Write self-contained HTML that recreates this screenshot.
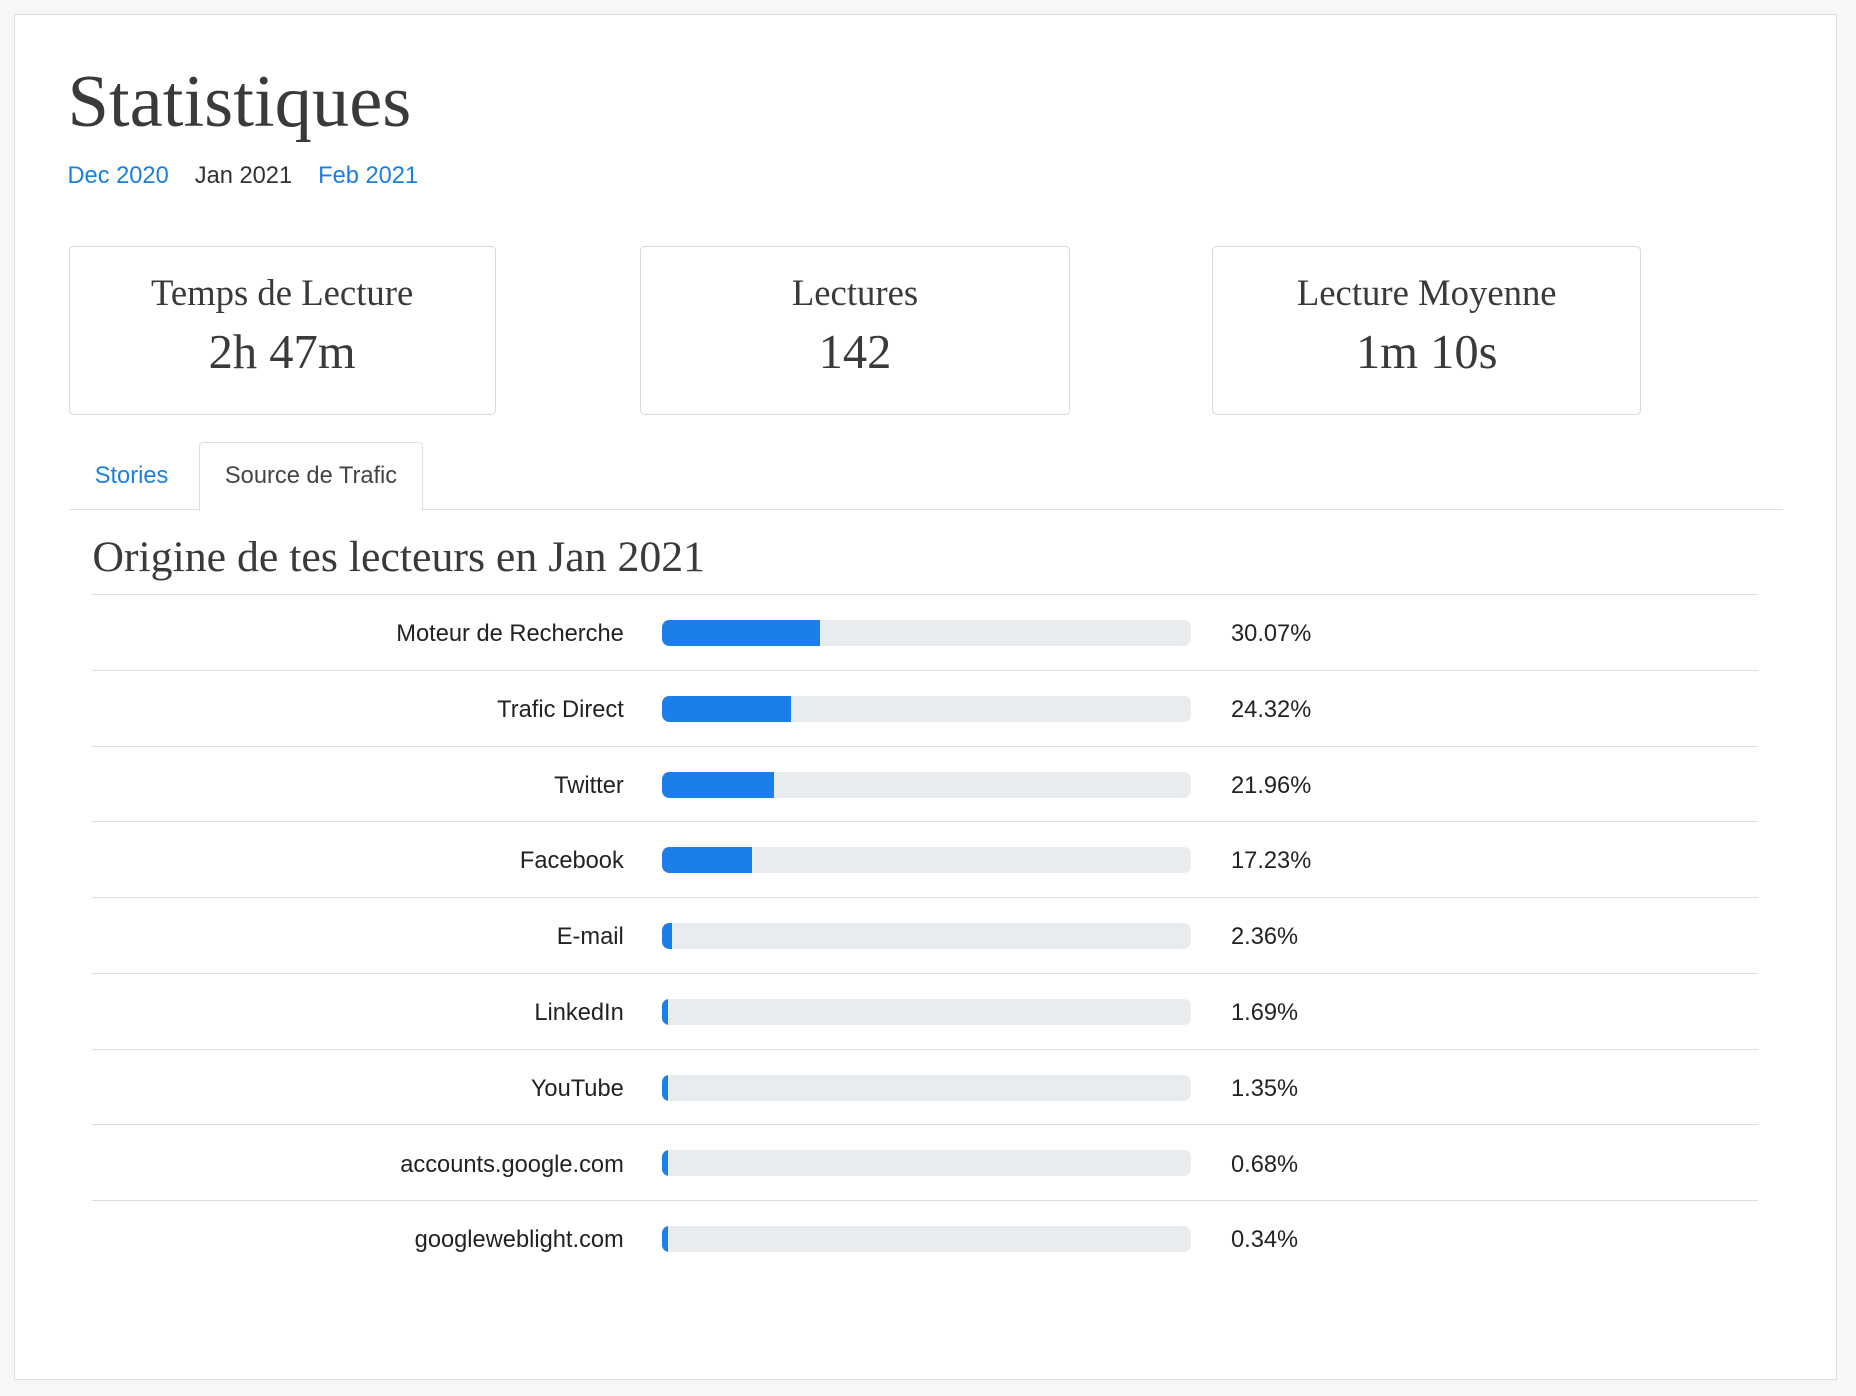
<!DOCTYPE html>
<html><head><meta charset="utf-8"><style>
html,body{margin:0;padding:0;background:#f7f7f8;}
#w{zoom:1.18367;width:1568px;height:1179px;position:relative;font-family:"Liberation Sans",sans-serif;color:#333;}
.card{position:absolute;left:12px;top:12px;width:1538px;height:1152px;background:#fff;border:1px solid #dcdde0;}
.serif{font-family:"Liberation Serif",serif;}
h1{position:absolute;left:57px;top:51px;margin:0;font-weight:normal;font-size:63px;color:#3a3a3a;}
.months{position:absolute;left:57px;top:138px;font-size:20px;}
.months span{margin-right:22px;}
.blue{color:#1a7fe0;}
.stat{position:absolute;top:208px;height:141px;border:1px solid #d8d9dc;border-radius:4px;text-align:center;color:#3a3a3a;}
.stat .l{margin-top:21px;font-size:31px;line-height:36px;}
.stat .v{margin-top:10px;font-size:41px;line-height:46px;}
.tabline{position:absolute;left:58px;top:430px;width:1448px;border-top:1px solid #dcdde0;}
.tab{position:absolute;font-size:20px;}
.acttab{position:absolute;left:168px;top:373px;width:188px;height:58px;border:1px solid #dcdde0;border-bottom:none;background:#fff;border-radius:4px 4px 0 0;}
h2{position:absolute;left:78px;top:451px;margin:0;font-weight:normal;font-size:37px;line-height:40px;color:#3a3a3a;}
.row{position:absolute;left:78px;width:1407px;height:64px;border-top:1px solid #dcdde0;}
.row .n{position:absolute;right:958px;top:22px;font-size:20px;color:#222;white-space:nowrap;}
.row .b{position:absolute;left:481px;top:21px;width:447px;height:22px;background:#e9ecef;border-radius:6px;overflow:hidden;}
.row .b i{display:block;height:100%;background:#1a7fe8;border-radius:6px 0 0 6px;}
.row .p{position:absolute;left:962px;top:22px;font-size:20px;color:#222;}
</style></head><body><div id="w">
<div class="card"></div>
<h1 class="serif">Statistiques</h1>
<div class="months"><span class="blue">Dec 2020</span><span>Jan 2021</span><span class="blue">Feb 2021</span></div>
<div class="stat serif" style="left:58px;width:359px"><div class="l">Temps de Lecture</div><div class="v">2h 47m</div></div>
<div class="stat serif" style="left:541px;width:361px"><div class="l">Lectures</div><div class="v">142</div></div>
<div class="stat serif" style="left:1024px;width:361px"><div class="l">Lecture Moyenne</div><div class="v">1m 10s</div></div>
<div class="tabline"></div>
<div class="acttab"></div>
<div class="tab blue" style="left:80px;top:391px">Stories</div>
<div class="tab" style="left:190px;top:391px;color:#444">Source de Trafic</div>
<h2 class="serif">Origine de tes lecteurs en Jan 2021</h2>
<div class="row" style="top:502px"><span class="n">Moteur de Recherche</span><div class="b"><i style="width:134px"></i></div><span class="p">30.07%</span></div>
<div class="row" style="top:566px"><span class="n">Trafic Direct</span><div class="b"><i style="width:109px"></i></div><span class="p">24.32%</span></div>
<div class="row" style="top:630px"><span class="n">Twitter</span><div class="b"><i style="width:95px"></i></div><span class="p">21.96%</span></div>
<div class="row" style="top:694px"><span class="n">Facebook</span><div class="b"><i style="width:76px"></i></div><span class="p">17.23%</span></div>
<div class="row" style="top:758px"><span class="n">E-mail</span><div class="b"><i style="width:9px"></i></div><span class="p">2.36%</span></div>
<div class="row" style="top:822px"><span class="n">LinkedIn</span><div class="b"><i style="width:5px"></i></div><span class="p">1.69%</span></div>
<div class="row" style="top:886px"><span class="n">YouTube</span><div class="b"><i style="width:5px"></i></div><span class="p">1.35%</span></div>
<div class="row" style="top:950px"><span class="n">accounts.google.com</span><div class="b"><i style="width:5px"></i></div><span class="p">0.68%</span></div>
<div class="row" style="top:1014px"><span class="n">googleweblight.com</span><div class="b"><i style="width:5px"></i></div><span class="p">0.34%</span></div>
</div></body></html>
